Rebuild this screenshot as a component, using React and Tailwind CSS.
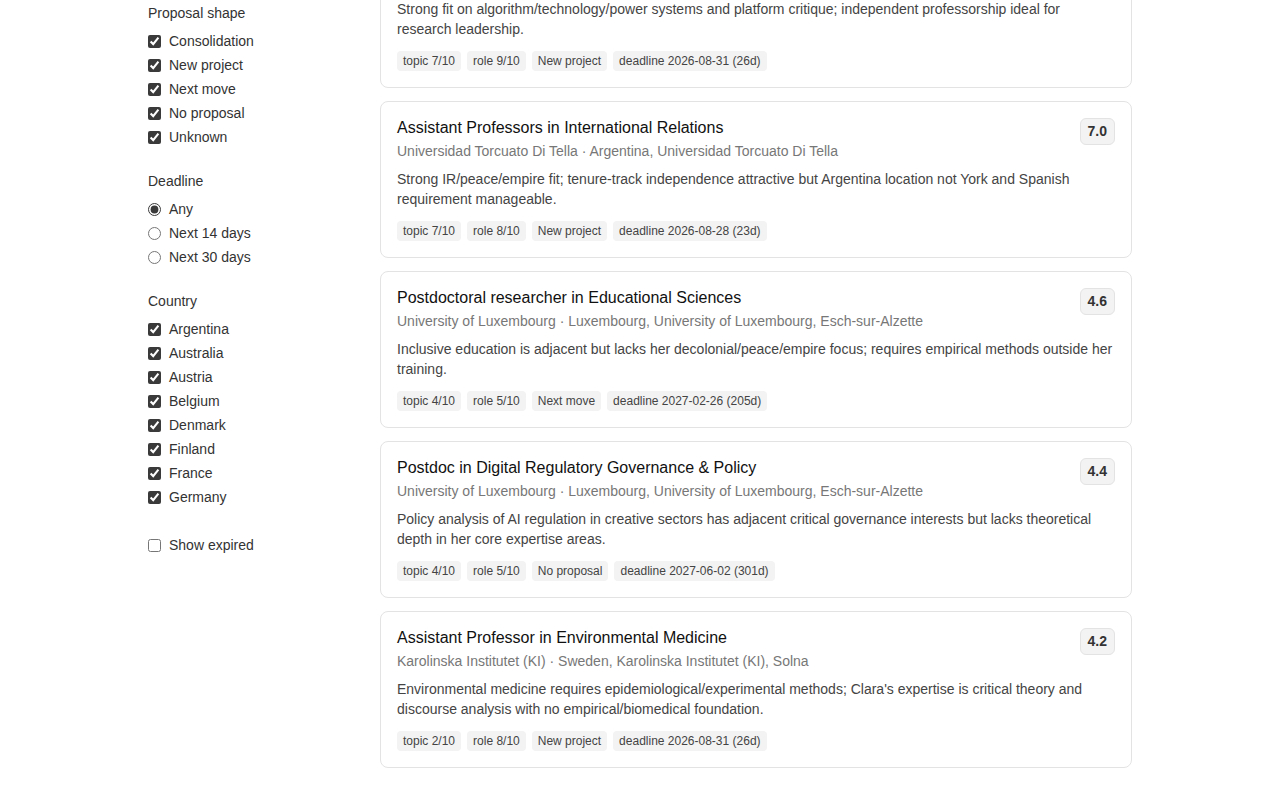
import { useState } from 'react'

const shapes = ['Consolidation', 'New project', 'Next move', 'No proposal', 'Unknown']
const countries = ['Argentina', 'Australia', 'Austria', 'Belgium', 'Denmark', 'Finland', 'France', 'Germany']

const jobs = [
  {
    title: 'Professorship in Digital Technology and Society',
    org: 'University',
    place: 'Germany',
    score: '7.4',
    note: 'Strong fit on algorithm/technology/power systems and platform critique; independent professorship ideal for research leadership.',
    tags: ['topic 7/10', 'role 9/10', 'New project', 'deadline 2026-08-31 (26d)'],
  },
  {
    title: 'Assistant Professors in International Relations',
    org: 'Universidad Torcuato Di Tella',
    place: 'Argentina, Universidad Torcuato Di Tella',
    score: '7.0',
    note: 'Strong IR/peace/empire fit; tenure-track independence attractive but Argentina location not York and Spanish requirement manageable.',
    tags: ['topic 7/10', 'role 8/10', 'New project', 'deadline 2026-08-28 (23d)'],
  },
  {
    title: 'Postdoctoral researcher in Educational Sciences',
    org: 'University of Luxembourg',
    place: 'Luxembourg, University of Luxembourg, Esch-sur-Alzette',
    score: '4.6',
    note: 'Inclusive education is adjacent but lacks her decolonial/peace/empire focus; requires empirical methods outside her training.',
    tags: ['topic 4/10', 'role 5/10', 'Next move', 'deadline 2027-02-26 (205d)'],
  },
  {
    title: 'Postdoc in Digital Regulatory Governance & Policy',
    org: 'University of Luxembourg',
    place: 'Luxembourg, University of Luxembourg, Esch-sur-Alzette',
    score: '4.4',
    note: 'Policy analysis of AI regulation in creative sectors has adjacent critical governance interests but lacks theoretical depth in her core expertise areas.',
    tags: ['topic 4/10', 'role 5/10', 'No proposal', 'deadline 2027-06-02 (301d)'],
  },
  {
    title: 'Assistant Professor in Environmental Medicine',
    org: 'Karolinska Institutet (KI)',
    place: 'Sweden, Karolinska Institutet (KI), Solna',
    score: '4.2',
    note: "Environmental medicine requires epidemiological/experimental methods; Clara's expertise is critical theory and discourse analysis with no empirical/biomedical foundation.",
    tags: ['topic 2/10', 'role 8/10', 'New project', 'deadline 2026-08-31 (26d)'],
  },
]

const Check = ({ label, defaultChecked }) => (
  <label className="flex items-center gap-2 h-6 text-sm text-[#333] cursor-pointer">
    <input type="checkbox" defaultChecked={defaultChecked} className="w-[13px] h-[13px] accent-[#3a3a3a]" />
    <span>{label}</span>
  </label>
)

const Sidebar = () => {
  const [deadline, setDeadline] = useState('any')

  return (
    <aside className="w-[200px] shrink-0 pt-[3px]">
      {/* Proposal shape */}
      <div className="text-sm text-[#333] h-5 leading-5 mb-[6px]">Proposal shape</div>
      {shapes.map((s) => <Check key={s} label={s} defaultChecked />)}

      {/* Deadline */}
      <div className="text-sm text-[#333] h-5 leading-5 mt-[22px] mb-[6px]">Deadline</div>
      {[['any', 'Any'], ['14', 'Next 14 days'], ['30', 'Next 30 days']].map(([v, l]) => (
        <label key={v} className="flex items-center gap-2 h-6 text-sm text-[#333] cursor-pointer">
          <input
            type="radio"
            name="deadline"
            checked={deadline === v}
            onChange={() => setDeadline(v)}
            className="w-[13px] h-[13px] accent-[#3a3a3a]"
          />
          <span>{l}</span>
        </label>
      ))}

      {/* Country */}
      <div className="text-sm text-[#333] h-5 leading-5 mt-[22px] mb-[6px]">Country</div>
      {countries.map((c) => <Check key={c} label={c} defaultChecked />)}

      <div className="mt-6">
        <Check label="Show expired" />
      </div>
    </aside>
  )
}

const JobCard = ({ job }) => (
  <div className="bg-white border border-[#e3e3e3] rounded-lg p-4">
    <div className="flex items-start justify-between gap-4">
      <div className="min-w-0">
        <h3 className="text-base leading-5 text-[#111]">{job.title}</h3>
        <p className="text-sm leading-5 text-[#777] mt-[3px]">{job.org} · {job.place}</p>
      </div>
      <span className="shrink-0 text-sm font-bold text-[#333] bg-[#f3f3f3] border border-[#e3e3e3] rounded-md px-[7px] h-[27px] leading-[25px]">
        {job.score}
      </span>
    </div>
    <p className="text-sm leading-5 text-[#444] mt-2">{job.note}</p>
    <div className="flex flex-wrap gap-1.5 mt-3">
      {job.tags.map((t) => (
        <span key={t} className="text-xs h-5 leading-5 px-1.5 rounded bg-[#f3f3f3] text-[#444]">{t}</span>
      ))}
    </div>
  </div>
)

export default function App() {
  return (
    <div className="min-h-screen bg-white overflow-hidden" style={{ fontFamily: '"Liberation Sans", Arial, sans-serif' }}>
      <div className="max-w-[984px] mx-auto flex gap-8">
        <Sidebar />
        <main className="flex-1 min-w-0 flex flex-col gap-[13px] -mt-[69px] pb-8">
          {jobs.map((j) => <JobCard key={j.title} job={j} />)}
        </main>
      </div>
    </div>
  )
}
